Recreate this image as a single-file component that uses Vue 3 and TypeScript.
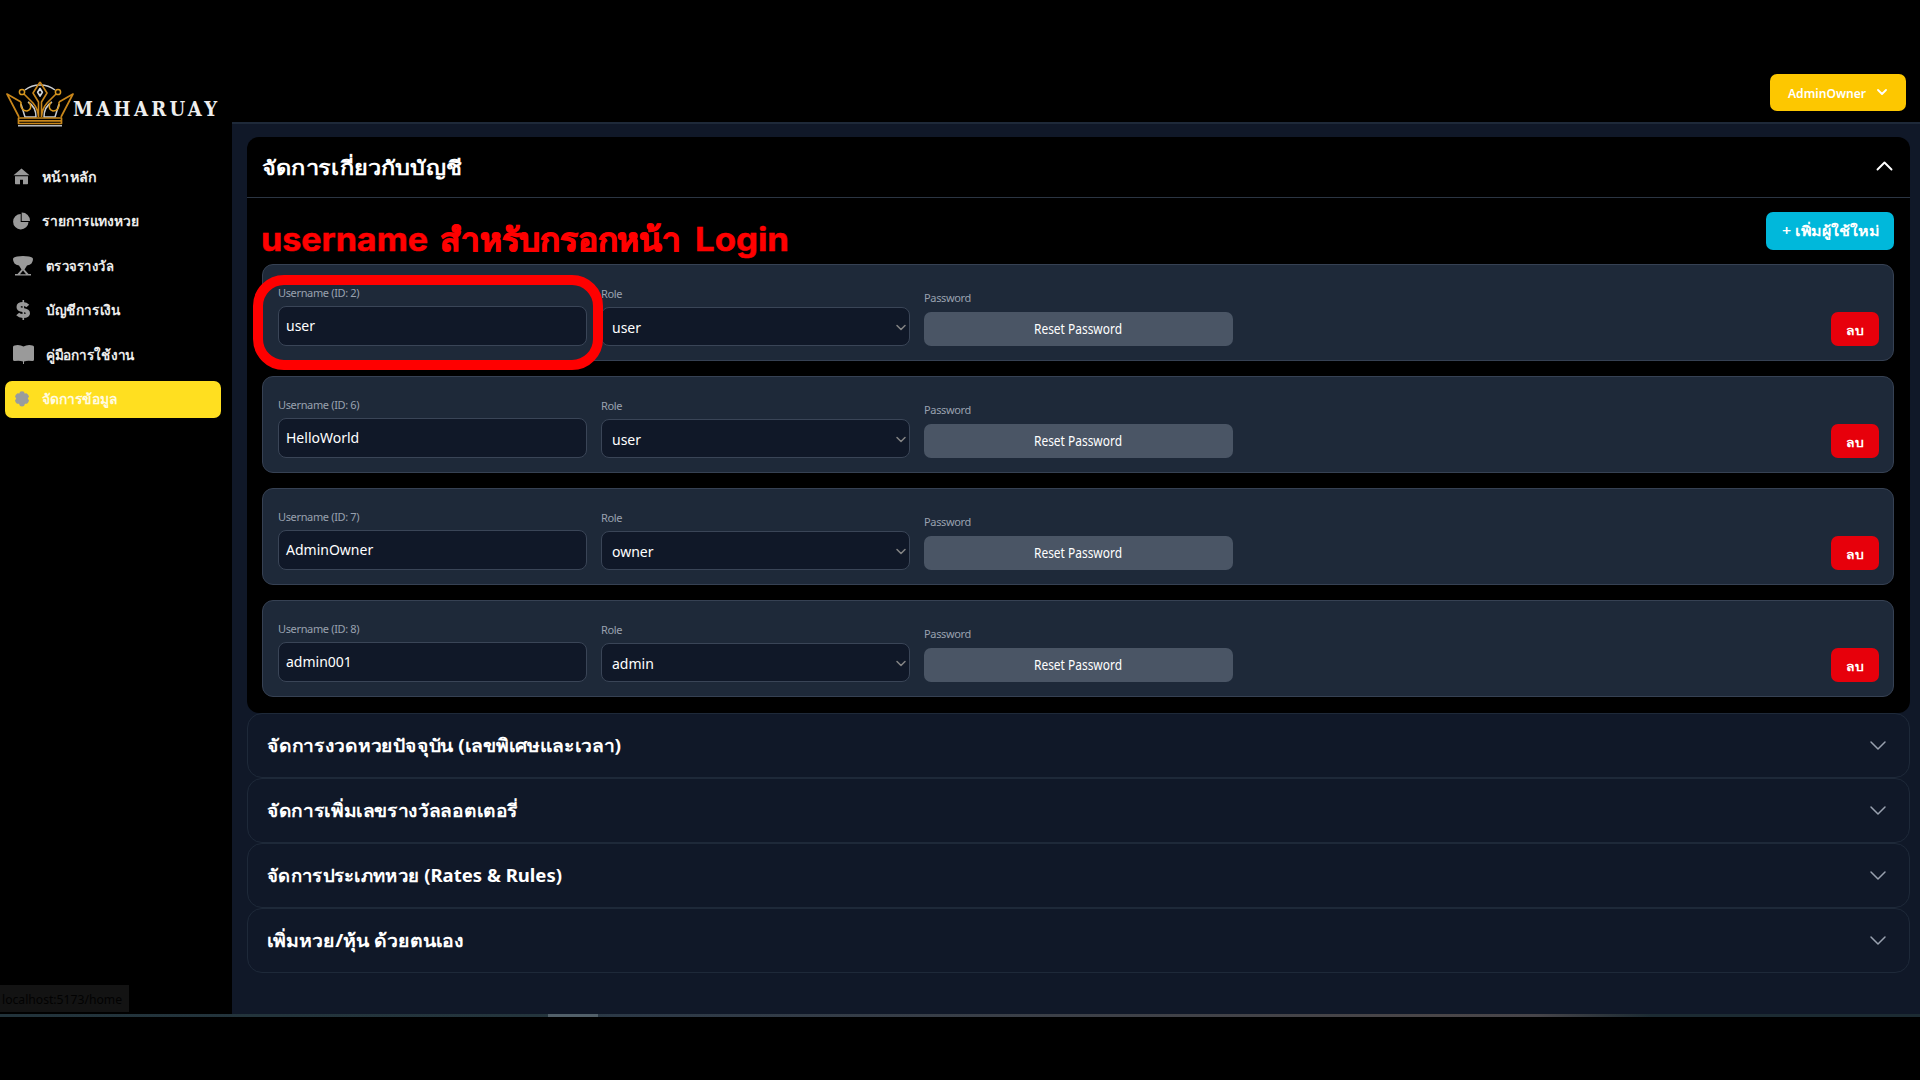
<script setup lang="ts">
interface NavItem { label: string; icon: string; x: number; w: number; active?: boolean }
interface Account { id: number; name: string; role: string }
interface Section { title: string; w: number }

const nav: NavItem[] = [
  { label: 'หน้าหลัก', icon: 'home', x: 42, w: 54 },
  { label: 'รายการแทงหวย', icon: 'pie', x: 42, w: 97 },
  { label: 'ตรวจรางวัล', icon: 'trophy', x: 46, w: 68 },
  { label: 'บัญชีการเงิน', icon: 'dollar', x: 46, w: 75 },
  { label: 'คู่มือการใช้งาน', icon: 'book', x: 46, w: 89 },
  { label: 'จัดการข้อมูล', icon: 'gear', x: 42, w: 76, active: true },
]
const accounts: Account[] = [
  { id: 2, name: 'user', role: 'user' },
  { id: 6, name: 'HelloWorld', role: 'user' },
  { id: 7, name: 'AdminOwner', role: 'owner' },
  { id: 8, name: 'admin001', role: 'admin' },
]
const sections: Section[] = [
  { title: 'จัดการงวดหวยปัจจุบัน (เลขพิเศษและเวลา)', w: 354 },
  { title: 'จัดการเพิ่มเลขรางวัลลอตเตอรี่', w: 251 },
  { title: 'จัดการประเภทหวย (Rates & Rules)', w: 295 },
  { title: 'เพิ่มหวย/หุ้น ด้วยตนเอง', w: 197 },
]
</script>

<template>
  <div class="screen">
    <aside class="sidebar">
      <div class="brand">
        <svg class="crown" width="68" height="46" viewBox="0 0 68 46" fill="none" stroke-linejoin="round">
          <path d="M19 9C24 5 29 4 34 4s10 1 15 5M15 23l4 13h11c0-8-3-12-8-15M53 23l-4 13H38c0-8 3-12 8-15" stroke="#c9ccd0" stroke-width="1.500" />
          <path d="M12 44.700h44" stroke="#b9bcc0" stroke-width="1.600" />
          <path d="M13 36L1 13l14 8M55 36L67 13l-14 8M12.500 37h43v5.500h-43zM13 39.800h42" stroke="#c8861a" stroke-width="1.700" />
          <path d="M18 13l9 9q5 6 5.500 14M50 13l-9 9q-5 6-5.500 14M34 1l-7 11 5.500 9v15M34 1l7 11-5.500 9v15" stroke="#c8861a" stroke-width="1.600" />
          <path d="M15 21c-1 6 2 9 6 9 4-1 5-5 2-9M53 21c1 6-2 9-6 9-4-1-5-5-2-9" stroke="#d9991f" stroke-width="1.500" />
          <circle cx="16" cy="11" r="2.600" stroke="#d9991f" stroke-width="1.500" />
          <circle cx="52" cy="11" r="2.600" stroke="#d9991f" stroke-width="1.500" />
          <path d="M34 7.500l-2.300 3.800 2.300 3.800 2.300-3.800z" stroke="#d5d8dc" stroke-width="1.700" />
        </svg>
        <svg class="fit wordmark" width="146" height="24"><text x="0" y="18" textLength="144" lengthAdjust="spacing">MAHARUAY</text></svg>
      </div>
      <nav class="menu">
        <a v-for="n in nav" :key="n.icon" class="item" :class="{ active: n.active }">
          <span class="icon" :style="{ width: n.x - 13 + 'px' }">
            <svg v-if="n.icon === 'home'" width="17" height="17" viewBox="0 0 17 17"><path d="M8.500 .500L.500 7.200h16zM2 8.200h13V15.500q0 .800-.800.800H10v-4.500H7v4.500H2.800Q2 16.300 2 15.500z" /></svg>
            <svg v-else-if="n.icon === 'pie'" width="18" height="18" viewBox="0 0 18 18"><path d="M7.700 2A7.700 7.700 0 1 0 15.500 10H7.700z" /><path d="M8.700.500A8.200 8.200 0 0 1 17 9H8.700z" /></svg>
            <svg v-else-if="n.icon === 'trophy'" width="20" height="20" viewBox="0 0 20 20"><path d="M4 .500Q10-.500 16 .500 20 1.200 20 3 20 8.500 14 9.500L11.500 13.500 15.500 18H18v1.500H2V18h2.500L8.500 13.500 6 9.500Q0 8.500 0 3 0 1.200 4 .500z" /><path d="M10 14.500L7 18.200h6z" fill="#000" /></svg>
            <svg v-else-if="n.icon === 'dollar'" width="20" height="20" viewBox="0 0 20 20"><path d="M14.800 6Q13 4 10 4 5.500 4 5.500 7 5.500 9.500 10 10 15 10.700 15 13.200 15 16 10 16 6.500 16 4.700 14" fill="none" stroke="#9a9a9a" stroke-width="4" /><path d="M10.300 0v20" stroke="#9a9a9a" stroke-width="1.600" /></svg>
            <svg v-else-if="n.icon === 'book'" width="21" height="19" viewBox="0 0 21 19"><path d="M1.500.400Q7-.600 10.500 1.600 14-.600 19.500.400 21 .700 21 2V14.500Q21 16 19.500 16 14 15.200 11 16.500V19H10V16.500Q7 15.200 1.500 16 0 16 0 14.500V2Q0 .700 1.500.400z" /></svg>
            <svg v-else class="gear" width="16" height="16" viewBox="0 0 16 16"><path d="M6 .700Q8-.300 10 .700l.6 1.700 1.900-.2Q14.500 3.500 15 5.600L13.800 7.500 15 9.500Q14.700 11.500 13 12.800L11 12.700 10 15Q8 15.900 6 15L5 12.700 3 12.800Q1.300 11.500 1 9.500L2.200 7.500 1 5.600Q1.500 3.500 3.500 2.200L5.400 2.400z" /></svg>
          </span>
          <svg class="fit" :width="n.w + 2" height="30"><text x="0" y="19.500" :textLength="n.w" lengthAdjust="spacingAndGlyphs">{{ n.label }}</text></svg>
        </a>
      </nav>
      <div class="status"><svg class="fit" width="124" height="26"><text x="2" y="18.500" textLength="120" lengthAdjust="spacingAndGlyphs">localhost:5173/home</text></svg></div>
    </aside>

    <div class="body">
      <header class="topbar">
        <button class="owner">
          <svg class="fit" width="79" height="24"><text x="0" y="16.500" textLength="78" lengthAdjust="spacingAndGlyphs">AdminOwner</text></svg>
          <svg class="chev" width="12" height="8" viewBox="0 0 12 8"><path d="M2 1l4 4 4-4" stroke-width="1.800" /></svg>
        </button>
      </header>
      <main class="content">
        <section class="panel">
          <div class="panel-head">
            <svg class="fit" width="202" height="40"><text x="0" y="27.500" textLength="200" lengthAdjust="spacingAndGlyphs">จัดการเกี่ยวกับบัญชี</text></svg>
            <svg class="chev" width="18" height="12" viewBox="0 0 18 12"><path d="M2.500 8.500L9.500 1.500l7 7" stroke-width="1.900" /></svg>
          </div>
          <div class="panel-body">
            <div class="tools">
              <svg class="fit note" width="532" height="50">
                <text x="-1" y="39" textLength="167" lengthAdjust="spacingAndGlyphs">username</text>
                <text class="thai" x="178" y="39" textLength="241" lengthAdjust="spacingAndGlyphs">สำหรับกรอกหน้า</text>
                <text x="433" y="39" textLength="94" lengthAdjust="spacingAndGlyphs">Login</text>
              </svg>
              <button class="add"><svg class="fit" width="98" height="36"><text x="-1" y="23" textLength="97" lengthAdjust="spacingAndGlyphs">+ เพิ่มผู้ใช้ใหม่</text></svg></button>
            </div>
            <article v-for="(a, i) in accounts" :key="a.id" class="row">
              <div class="field user">
                <label>Username (ID: {{ a.id }})</label>
                <div class="box">{{ a.name }}</div>
              </div>
              <div class="field role">
                <label>Role</label>
                <div class="box">
                  <span>{{ a.role }}</span>
                  <svg class="chev" width="12" height="8" viewBox="0 0 12 8"><path d="M2 1.500l4 4 4-4" stroke-width="1.500" /></svg>
                </div>
              </div>
              <div class="field pass">
                <label>Password</label>
                <button class="reset"><svg class="fit" width="89" height="24"><text x="0" y="17" textLength="88" lengthAdjust="spacingAndGlyphs">Reset Password</text></svg></button>
              </div>
              <button class="del"><svg class="fit" width="18" height="24"><text x="0" y="17.500" textLength="17" lengthAdjust="spacingAndGlyphs">ลบ</text></svg></button>
              <div v-if="i === 0" class="marker"></div>
            </article>
          </div>
        </section>
        <section v-for="s in sections" :key="s.title" class="fold">
          <svg class="fit" :width="s.w + 3" height="40"><text x="0" y="26" :textLength="s.w" lengthAdjust="spacingAndGlyphs">{{ s.title }}</text></svg>
          <svg class="chev" width="18" height="12" viewBox="0 0 18 12"><path d="M2 2l7 7 7-7" stroke-width="1.500" /></svg>
        </section>
      </main>
    </div>
    <div class="track"><span class="thumb"></span></div>
  </div>
</template>

<style>
html, body { background: #000; overflow: hidden; }
</style>
<style scoped>
* { box-sizing: border-box; }
.screen { position: relative; width: 1920px; height: 1080px; display: grid; grid-template: 1014px 3px 1fr / 232px 1fr; background: #000; color: #fff; font-family: "Noto Sans", "Open Sans", sans-serif; }
button { border: 0; padding: 0; color: #fff; font-family: inherit; }
svg { display: block; flex: none; }
.fit { overflow: visible; fill: #fff; font-weight: 700; }
.chev path { fill: none; stroke: #fff; stroke-linecap: round; stroke-linejoin: round; }
.sidebar { display: flex; flex-direction: column; height: 1014px; }
.brand { display: flex; padding: 81px 0 0 6px; height: 158px; }
.wordmark { margin: 17px 0 0 -1px; font-family: "DejaVu Serif", serif; font-size: 20px; font-stretch: condensed; fill: #eee; }
.menu { display: flex; flex-direction: column; gap: 7.600px; padding: 0 11px 0 5px; }
.item { display: flex; align-items: center; height: 37px; padding-left: 8px; border-radius: 7px; }
.item .fit { font-size: 14px; fill: #ececec; height: 30px; }
.item.active { background: #ffdf20; }
.item.active .fit { fill: #fffbe0; }
.icon svg { fill: #9a9a9a; }
.icon .gear { margin-left: 1px; fill: #999c9e; }
.status { margin-top: auto; margin-bottom: 2px; width: 129px; height: 27px; background: #131313; }
.status .fit { font-size: 13px; font-weight: 400; fill: #020202; }
.body { display: flex; flex-direction: column; }
.topbar { height: 124px; border-bottom: 2px solid #1e2939; display: flex; justify-content: flex-end; padding: 74px 14px 0 0; }
.owner { width: 136px; height: 37px; border-radius: 7px; background: #fdc700; display: flex; align-items: center; gap: 9px; padding-left: 18px; }
.owner .fit { font-size: 13px; font-weight: 600; }
.content { flex: 1; background: #101828; padding: 13px 10px 0 15px; }
.panel { background: #000; border-radius: 12px; height: 576px; }
.panel-head { display: flex; align-items: center; justify-content: space-between; height: 61px; border-bottom: 1px solid #2b3543; padding: 0 17px 0 15px; }
.panel-head .fit { font-size: 20px; }
.panel-body { padding: 14px 16px 0 15px; display: flex; flex-direction: column; gap: 15px; }
.tools { display: flex; justify-content: space-between; align-items: flex-start; height: 37px; }
.note { font-family: Inter, "Noto Sans", sans-serif; font-size: 32px; font-weight: 700; fill: #f00; stroke: #f00; stroke-width: 0.500px; }
.note .thai { stroke-width: 1px; }
.add { width: 128px; height: 38px; border-radius: 7px; background: #00b8db; display: flex; align-items: center; padding-left: 17px; }
.add .fit { font-size: 14px; font-weight: 600; }
.row { position: relative; display: flex; align-items: flex-end; gap: 14px; height: 97px; padding: 0 14px 14px 15px; background: #1e2939; border: 1px solid #364153; border-radius: 11px; }
.field { width: 309px; display: flex; flex-direction: column; }
.field label { font-size: 11px; line-height: 14px; color: #99a1af; letter-spacing: -0.350px; }
.box { display: flex; align-items: center; border: 1px solid #3a4557; background: #101828; border-radius: 8px; font-size: 14px; }
.user .box { height: 40px; margin-top: 6px; padding: 0 8px 2px 7px; }
.role .box { height: 39px; margin-top: 6px; padding: 2px 2px 0 10px; justify-content: space-between; }
.role .chev path { stroke: #858585; }
.pass label { margin-bottom: 7px; }
.reset { height: 34px; border-radius: 7px; background: #4a5565; display: flex; align-items: center; justify-content: center; }
.reset .fit { font-size: 13.500px; font-weight: 400; }
.del { margin-left: auto; width: 48px; height: 34px; border-radius: 7px; background: #e7000b; display: flex; align-items: center; justify-content: center; }
.del .fit { font-size: 11.500px; }
.marker { position: absolute; left: -10px; top: 10px; width: 350px; height: 95px; border: 10px solid #f00; border-radius: 31px; }
.fold { display: flex; align-items: center; justify-content: space-between; height: 65.100px; border: 1px solid #1e2939; border-radius: 15px; padding: 0 22px 0 19px; }
.fold .fit { font-size: 18px; }
.fold .chev path { stroke: #99a1af; }
.track { grid-column: 1 / 3; background: linear-gradient(90deg, #22333b, #24353d 28%, #2c3947 32%, #3c4048 55%, #4a4648 75%, #47454a 80%, #1c2b33 86%); }
.thumb { display: block; width: 50px; height: 3px; margin-left: 548px; background: #52606a; }
</style>
